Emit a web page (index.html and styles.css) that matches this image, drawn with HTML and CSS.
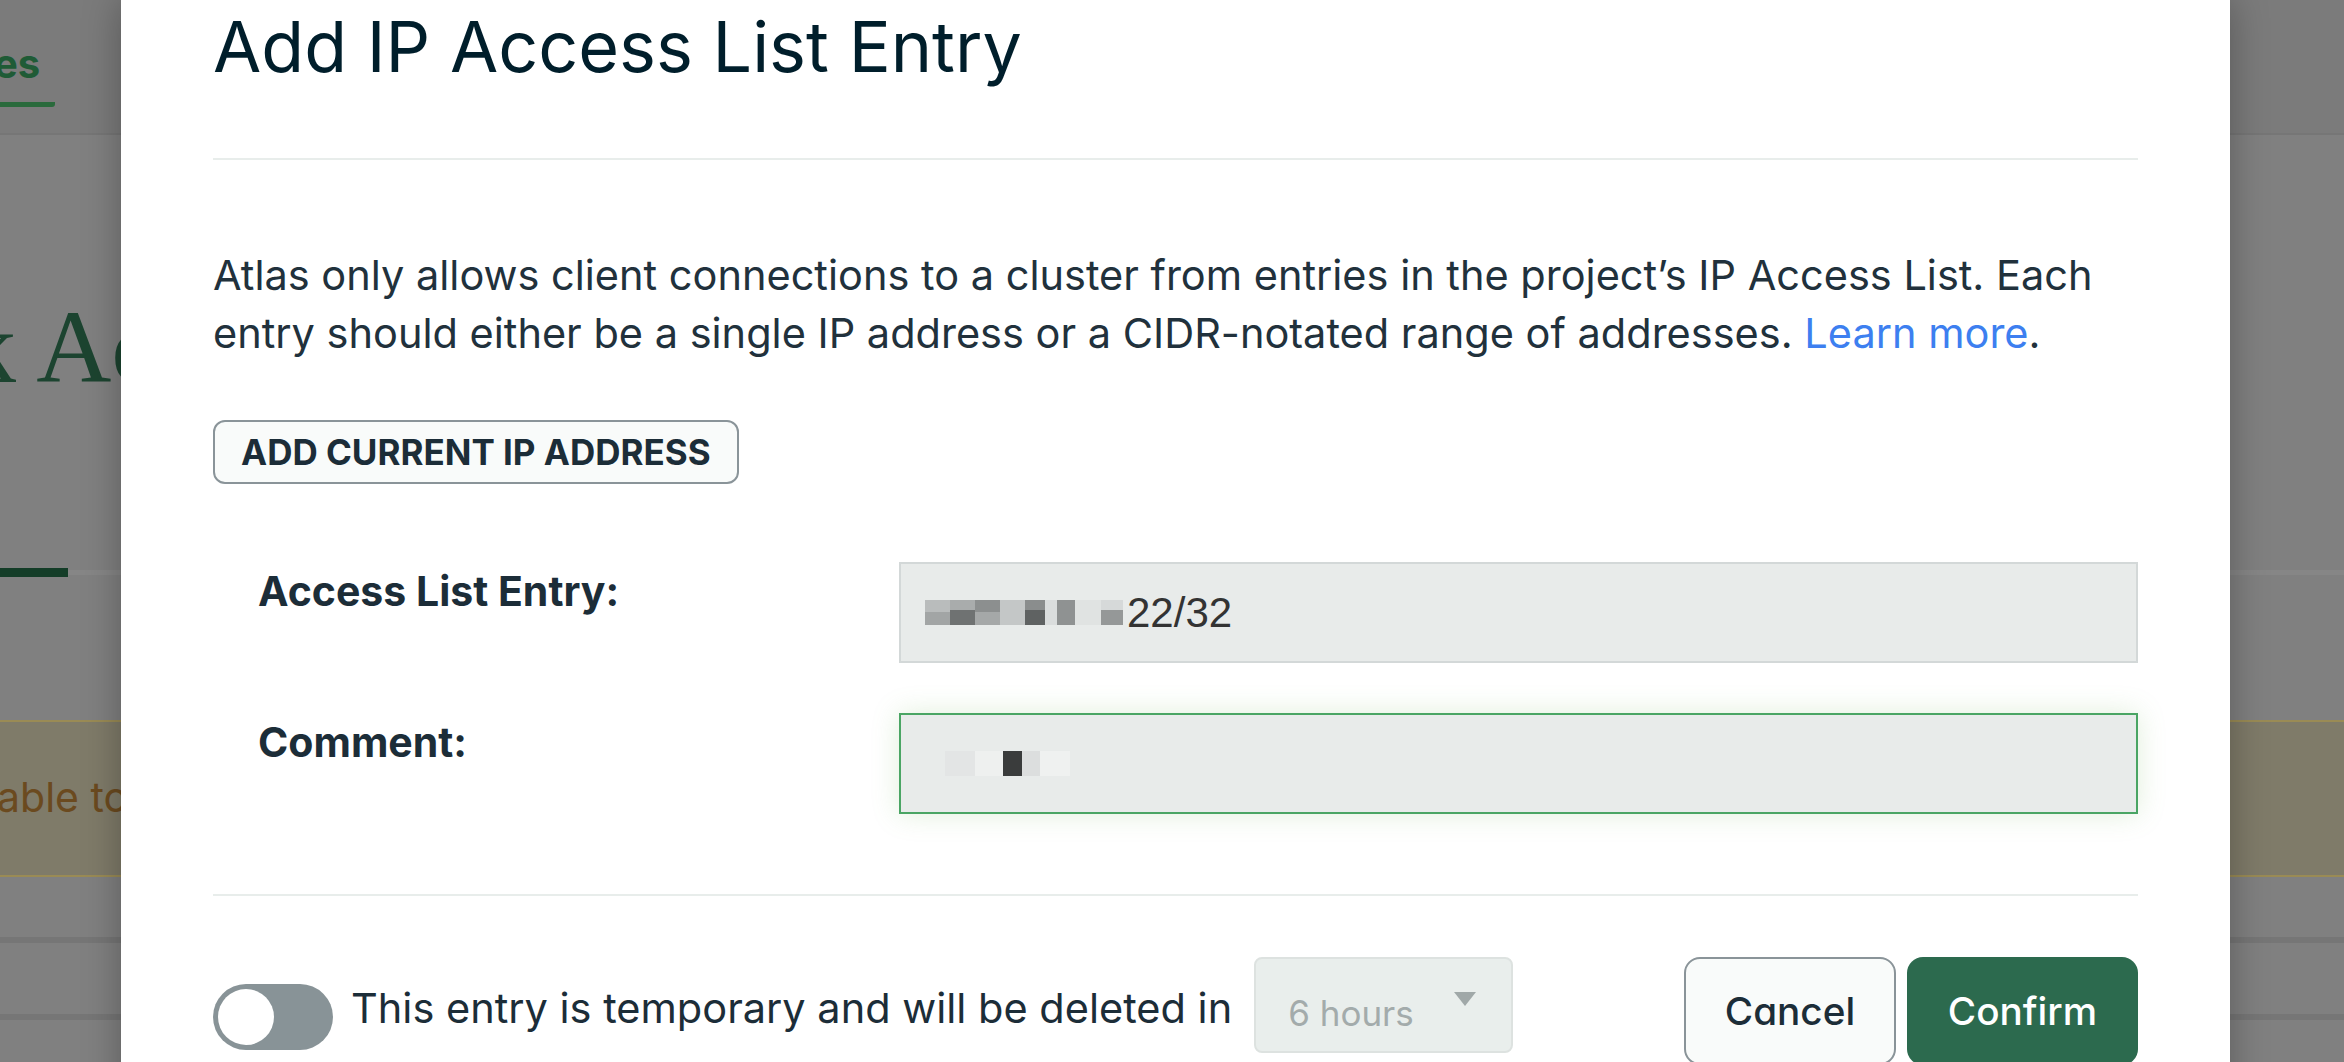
FILE: index.html
```html
<!DOCTYPE html>
<html lang="en">
<head>
<meta charset="utf-8">
<title>Add IP Access List Entry</title>
<link rel="stylesheet" href="styles.css">
</head>
<body>
<div class="backdrop">
  <div class="topbar"><div class="tab">es</div></div>
  <h1 class="page-title">k Access</h1>
  <div class="subtabs"><div class="subtab-active"></div><div class="subtab-rest"></div></div>
  <div class="banner"><span class="banner-text">able to connect</span></div>
  <div class="bg-line first"></div>
  <div class="bg-line second"></div>
</div>

<div class="modal">
  <div class="modal-header"><h2 class="modal-title">Add IP Access List Entry</h2></div>
  <p class="intro">Atlas only allows client connections to a cluster from entries in the project’s IP Access List. Each entry should either be a single IP address or a CIDR-notated range of addresses. <a class="link" href="#">Learn more</a>.</p>
  <button class="add-ip">ADD CURRENT IP ADDRESS</button>
  <div class="form">
    <div class="label">Access List Entry:</div>
    <div class="field">
      <span class="mosaic"><i class="m1"></i><i class="m2"></i><i class="m3"></i><i class="m4"></i><i class="m5"></i><i class="m6"></i><i class="m7"></i><i class="m8"></i><i class="m9"></i></span><span class="value">22/32</span>
    </div>
    <div class="label">Comment:</div>
    <div class="field focus">
      <span class="mosaic small"><i class="c1"></i><i class="c2"></i><i class="c3"></i><i class="c4"></i><i class="c5"></i></span>
    </div>
  </div>
  <div class="modal-divider"></div>
  <div class="footer">
    <div class="temp">
      <div class="toggle"><div class="knob"></div></div>
      <span class="temp-text">This entry is temporary and will be deleted in</span>
      <div class="select">6 hours<span class="caret"></span></div>
    </div>
    <div class="actions">
      <button class="btn btn-cancel">Cancel</button>
      <button class="btn btn-confirm">Confirm</button>
    </div>
  </div>
</div>
</body>
</html>
```
FILE: styles.css
```css
* { box-sizing: border-box; }
html, body { margin: 0; padding: 0; }
body {
  width: 2344px;
  height: 1062px;
  overflow: hidden;
  position: relative;
  font-family: Inter, "Noto Sans", sans-serif;
  font-feature-settings: "cv11" 1;
}

/* dimmed page behind the modal */
.backdrop {
  height: 1062px;
  background: #808080;
  overflow: hidden;
}
.topbar {
  height: 135px;
  background: #7b7b7b;
  border-bottom: 2px solid #767676;
}
.tab {
  display: inline-block;
  width: 61px;
  margin-left: -6px;
  padding-top: 40px;
  padding-bottom: 14px;
  border-bottom: 5px solid #2a6a3c;
  border-radius: 0 0 3px 0;
  font: 700 40px/48px Inter, sans-serif;
  color: #1f5b36;
}
.page-title {
  margin: 152px 0 0 -36px;
  font: 400 104px/120px "Liberation Serif", serif;
  color: #1c4430;
  white-space: nowrap;
}
.subtabs {
  display: flex;
  align-items: center;
  height: 9px;
  margin-top: 161px;
}
.subtab-active { width: 68px; height: 9px; background: #143d28; }
.subtab-rest { flex: 1; height: 5px; background: #868686; }
.banner {
  margin-top: 143px;
  height: 157px;
  background: #7f7b69;
  border-top: 2px solid #9a8b55;
  border-bottom: 2px solid #9a8b55;
  padding-top: 46px;
  font: 400 41px/58px Inter, sans-serif;
  color: #6b4a1f;
  white-space: nowrap;
}
.banner-text { margin-left: -3px; }
.bg-line { height: 6px; background: #767676; }
.bg-line.first { margin-top: 60px; }
.bg-line.second { margin-top: 71px; }

/* modal */
.modal {
  position: absolute;
  left: 121px;
  top: 0;
  width: 2109px;
  height: 1120px;
  padding: 0 92px;
  background: #fff;
  box-shadow: 0 0 36px rgba(0, 0, 0, 0.3);
  color: #1c2d38;
}
.modal-header {
  padding-top: 4px;
  padding-bottom: 68px;
  border-bottom: 2px solid #e8edeb;
}
.modal-title {
  margin: 0;
  font: 400 70px/86px Inter, sans-serif;
  color: #001e2b;
  white-space: nowrap;
}
.intro {
  margin: 86px 0 0;
  font: 400 41.5px/58px Inter, sans-serif;
  color: #21313c;
}
.link { color: #3d7ff0; text-decoration: none; }
.add-ip {
  display: inline-flex;
  align-items: center;
  height: 64px;
  margin-top: 58px;
  padding: 0 26px;
  border: 2px solid #8a9499;
  border-radius: 12px;
  background: #f9fbfa;
  font: 700 35px Inter, sans-serif;
  font-feature-settings: "cv11" 1;
  color: #1c2d38;
}
.form {
  display: grid;
  grid-template-columns: 641px 1fr;
  row-gap: 50px;
  margin-top: 78px;
  padding-left: 45px;
}
.label {
  font: 700 41px/58px Inter, sans-serif;
  color: #1c2d38;
}
.field {
  display: flex;
  align-items: center;
  height: 101px;
  padding-left: 24px;
  background: #e8ebea;
  border: 2px solid #d3d8d8;
}
.field.focus {
  border-color: #4aa564;
  box-shadow: 0 0 26px rgba(120, 180, 90, 0.22);
}
.value {
  font: 400 42px "Liberation Sans", Arial, sans-serif;
  color: #333;
}
.mosaic { display: inline-flex; height: 25px; margin-right: 4px; }
.mosaic i { display: block; height: 25px; }
.m1 { width: 25px; background: linear-gradient(#b9bcbc 50%, #a2a5a5 50%); }
.m2 { width: 25px; background: linear-gradient(#a9acac 40%, #6f7272 40%); }
.m3 { width: 25px; background: linear-gradient(#8c8f8f 50%, #a5a8a8 50%); }
.m4 { width: 25px; background: #c4c7c7; }
.m5 { width: 20px; background: linear-gradient(#8a8d8d 40%, #5f6262 40%); }
.m6 { width: 12px; background: #dadddd; }
.m7 { width: 18px; background: #8f9292; }
.m8 { width: 26px; background: #e0e3e2; }
.m9 { width: 22px; background: linear-gradient(#d6d9d9 40%, #959898 40%); }
.mosaic.small { margin-left: 20px; }
.c1 { width: 30px; background: #e3e5e5; }
.c2 { width: 28px; background: #eef0ef; }
.c3 { width: 19px; background: #3a3c3c; }
.c4 { width: 18px; background: #dcdede; }
.c5 { width: 30px; background: #eff1f0; }

.modal-divider {
  margin-top: 80px;
  border-top: 2px solid #e8edeb;
}
.footer {
  display: flex;
  justify-content: space-between;
  align-items: flex-start;
  margin-top: 61px;
}
.temp { display: flex; align-items: flex-start; }
.toggle {
  width: 120px;
  height: 66px;
  margin-top: 27px;
  padding: 5px;
  border-radius: 33px;
  background: #889397;
}
.knob { width: 56px; height: 56px; border-radius: 50%; background: #fff; }
.temp-text {
  margin: 22px 0 0 18px;
  font: 400 41.5px/58px Inter, sans-serif;
  color: #1c2d38;
  white-space: nowrap;
}
.select {
  position: relative;
  width: 259px;
  height: 96px;
  margin-left: 22px;
  padding: 34px 0 0 32px;
  border: 2px solid #dde2e0;
  border-radius: 8px;
  background: #e9eeec;
  font: 400 35px/40px Inter, sans-serif;
  color: #a3abab;
}
.caret {
  position: absolute;
  right: 35px;
  top: 33px;
  border-left: 11px solid transparent;
  border-right: 11px solid transparent;
  border-top: 14px solid #a0a8a8;
}
.actions { display: flex; gap: 11px; }
.btn {
  display: flex;
  align-items: center;
  justify-content: center;
  height: 108px;
  border-radius: 16px;
  font: 500 38.7px Inter, sans-serif;
  font-feature-settings: "cv11" 1;
}
.btn-cancel { width: 212px; border: 2px solid #8a9499; background: #f9fbfa; color: #1c2d38; }
.btn-confirm { width: 231px; border: none; background: #2c6a4e; color: #fff; }
```
